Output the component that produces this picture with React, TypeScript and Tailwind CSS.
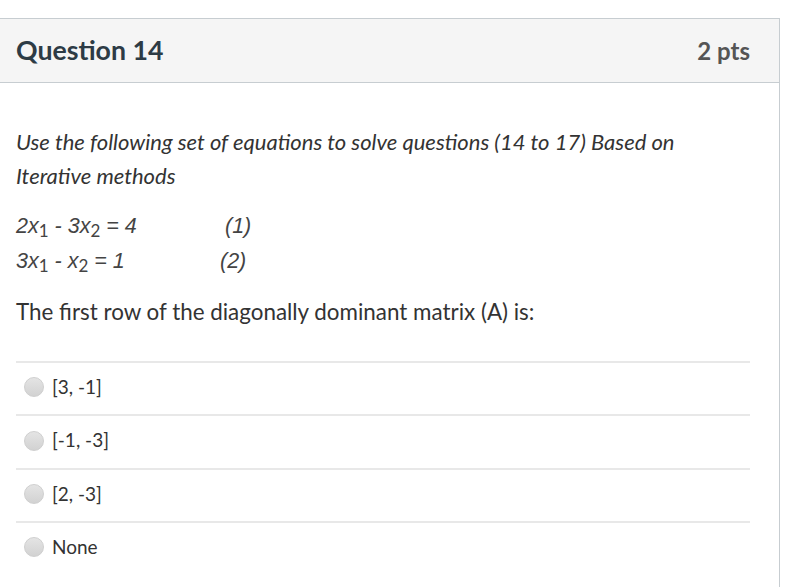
import React from 'react';

const answers = ['[3, -1]', '[-1, -3]', '[2, -3]', 'None'];

function Radio() {
  return (
    <span className="inline-block w-[20px] h-[20px] rounded-full bg-gradient-to-b from-[#e4e4e4] to-[#d2d2d2] border border-[#cfcfcf] shrink-0" />
  );
}

export default function App() {
  return (
    <div className="w-[810px] h-[587px] bg-white pt-[18px] overflow-hidden font-['Lato','Noto_Sans',sans-serif] text-[#2d3b45]">
      <div className="w-[781px] ml-[-1px] border border-[#c7cdd1] border-b-0 h-[600px]">
        <div className="h-[64px] bg-[#f5f5f5] border-b border-[#c7cdd1] flex items-center justify-between pl-[16px] pr-[29px]">
          <h2 className="text-[26.7px] font-bold leading-none">Question 14</h2>
          <span className="text-[24px] font-bold text-[#555] leading-none">2 pts</span>
        </div>

        <div className="pl-[16px] pr-[29px] pt-[42px] text-[#333]">
          <p className="italic text-[22px] leading-[34px]">
            Use the following set of equations to solve questions (14 to 17) Based on Iterative methods
          </p>

          <div className="mt-[16px] text-[21.5px] leading-[35px] text-[#444]">
            <div className="flex">
              <span className="w-[209px] italic font-['Liberation_Sans',sans-serif]">
                2x<sub className="not-italic font-['Lato',sans-serif] text-[17px]">1</sub> - 3x<sub className="not-italic font-['Lato',sans-serif] text-[17px]">2</sub> = 4
              </span>
              <span className="italic font-['Liberation_Sans',sans-serif]">(1)</span>
            </div>
            <div className="flex">
              <span className="w-[204px] italic font-['Liberation_Sans',sans-serif]">
                3x<sub className="not-italic font-['Lato',sans-serif] text-[17px]">1</sub> - x<sub className="not-italic font-['Lato',sans-serif] text-[17px]">2</sub> = 1
              </span>
              <span className="italic font-['Liberation_Sans',sans-serif]">(2)</span>
            </div>
          </div>

          <p className="mt-[16px] text-[22.4px] leading-[34px]">
            The first row of the diagonally dominant matrix (A) is:
          </p>

          <div className="mt-[32px]">
            {answers.map((a) => (
              <div key={a} className="h-[53.4px] border-t-2 border-[#e8e8e8] flex items-center gap-[8px] pl-[8px] pb-[3px]">
                <Radio />
                <span className="text-[19px] text-[#333]">{a}</span>
              </div>
            ))}
          </div>
        </div>
      </div>
    </div>
  );
}
